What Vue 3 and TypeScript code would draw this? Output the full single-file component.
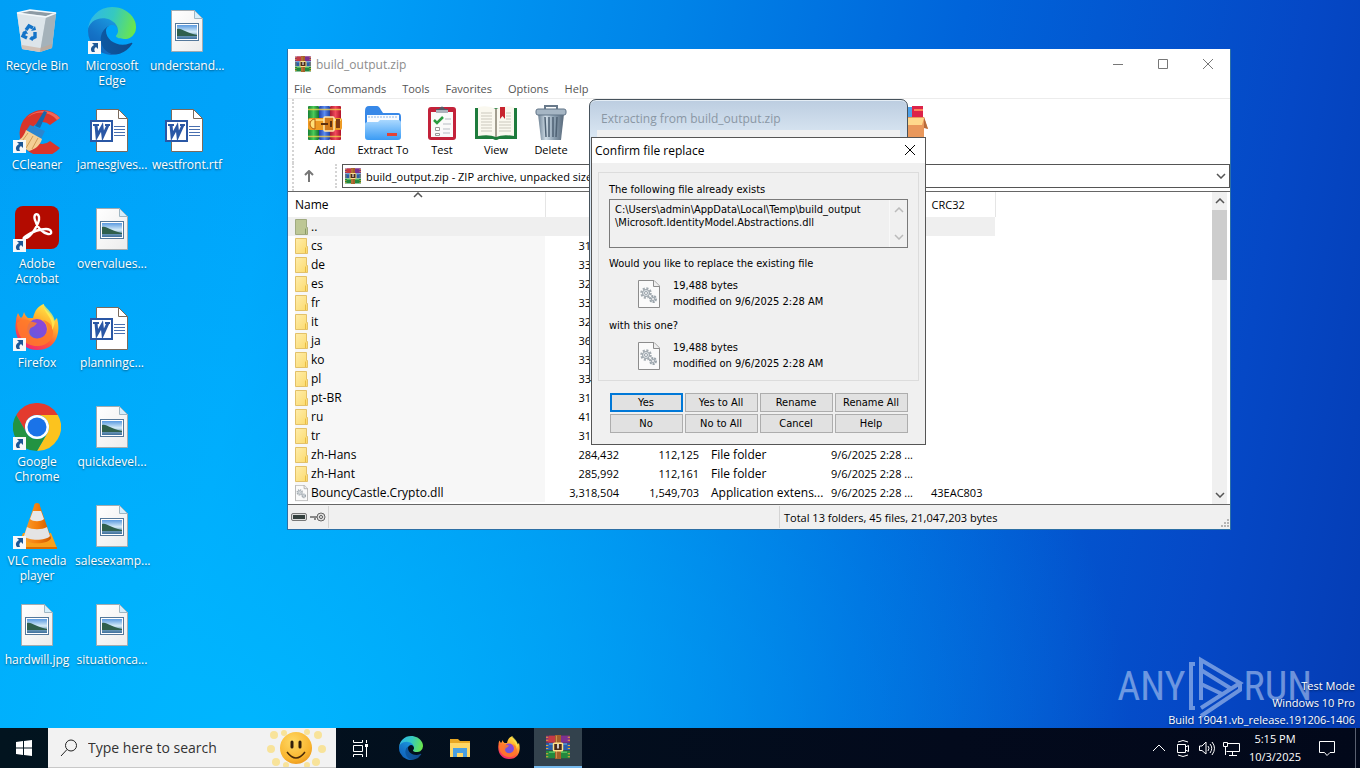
<script setup lang="ts">
interface Shortcut { icon: string; label: string; link?: boolean }
interface Row { icon: string; name: string; size: string; packed: string; type: string; modified: string; crc: string }

const shortcuts: Shortcut[] = [
  { icon: 'bin', label: 'Recycle Bin' },
  { icon: 'ccleaner', label: 'CCleaner', link: true },
  { icon: 'acrobat', label: 'Adobe Acrobat', link: true },
  { icon: 'firefox', label: 'Firefox', link: true },
  { icon: 'chrome', label: 'Google Chrome', link: true },
  { icon: 'vlc', label: 'VLC media player', link: true },
  { icon: 'picture', label: 'hardwill.jpg' },
  { icon: 'edge', label: 'Microsoft Edge', link: true },
  { icon: 'word', label: 'jamesgives...' },
  { icon: 'picture', label: 'overvalues...' },
  { icon: 'word', label: 'planningc...' },
  { icon: 'picture', label: 'quickdevel...' },
  { icon: 'picture', label: 'salesexamp...' },
  { icon: 'picture', label: 'situationca...' },
  { icon: 'picture', label: 'understand...' },
  { icon: 'word', label: 'westfront.rtf' },
]

const menus: string[] = ['File', 'Commands', 'Tools', 'Favorites', 'Options', 'Help']

const tools = [
  { icon: 'add', label: 'Add' },
  { icon: 'extract', label: 'Extract To' },
  { icon: 'test', label: 'Test' },
  { icon: 'view', label: 'View' },
  { icon: 'delete', label: 'Delete' },
]

const stamp = '9/6/2025 2:28 ...'
const folder = (name: string, size: string, packed = '', type = '', modified = ''): Row => ({
  icon: 'folder', name, size, packed, type, modified, crc: '',
})

const rows: Row[] = [
  folder('cs', '311,728'),
  folder('de', '331,696'),
  folder('es', '321,448'),
  folder('fr', '331,184'),
  folder('it', '321,960'),
  folder('ja', '361,904'),
  folder('ko', '331,208'),
  folder('pl', '331,720'),
  folder('pt-BR', '311,216'),
  folder('ru', '411,080'),
  folder('tr', '311,728'),
  folder('zh-Hans', '284,432', '112,125', 'File folder', stamp),
  folder('zh-Hant', '285,992', '112,161', 'File folder', stamp),
  {
    icon: 'dll', name: 'BouncyCastle.Crypto.dll', size: '3,318,504', packed: '1,549,703',
    type: 'Application extens...', modified: stamp, crc: '43EAC803',
  },
]

const path = 'C:\\Users\\admin\\AppData\\Local\\Temp\\build_output\n\\Microsoft.IdentityModel.Abstractions.dll'
const answers: string[] = ['Yes', 'Yes to All', 'Rename', 'Rename All', 'No', 'No to All', 'Cancel', 'Help']
</script>

<template>
  <div class="screen">
    <svg class="defs" aria-hidden="true">
      <defs>
        <linearGradient id="gEdgeA" x1="0" y1="0" x2="1" y2="0"><stop offset="0" stop-color="#0c59a4" /><stop offset="1" stop-color="#114a8b" /></linearGradient>
        <linearGradient id="gEdgeB" x1="0.8" y1="0" x2="0.2" y2="1"><stop offset="0" stop-color="#1b9de2" /><stop offset=".6" stop-color="#1472c6" /><stop offset="1" stop-color="#0f62b8" /></linearGradient>
        <linearGradient id="gEdgeC" x1="0" y1=".3" x2="1" y2=".5"><stop offset="0" stop-color="#2fb7ea" /><stop offset=".5" stop-color="#35c9c0" /><stop offset="1" stop-color="#6ae64c" /></linearGradient>
        <linearGradient id="gFox" x1=".8" y1="0" x2=".25" y2="1"><stop offset="0" stop-color="#fff14f" /><stop offset=".35" stop-color="#ffb32e" /><stop offset=".65" stop-color="#ff5b36" /><stop offset="1" stop-color="#f0207c" /></linearGradient>
        <linearGradient id="gGlobe" x1="0" y1="1" x2="1" y2="0"><stop offset="0" stop-color="#5b5fe0" /><stop offset="1" stop-color="#9a3fd5" /></linearGradient>
        <linearGradient id="gPage" x1="0" y1="0" x2="1" y2="1"><stop offset="0" stop-color="#ffffff" /><stop offset="1" stop-color="#ececec" /></linearGradient>
        <linearGradient id="gPhoto" x1="0" y1="0" x2="0" y2="1"><stop offset="0" stop-color="#5a9ae0" /><stop offset=".5" stop-color="#d6ecf8" /><stop offset=".7" stop-color="#7ba6c0" /><stop offset="1" stop-color="#3f6f9c" /></linearGradient>
        <linearGradient id="gCone" x1="0" y1="0" x2="1" y2="0"><stop offset="0" stop-color="#f9a030" /><stop offset=".5" stop-color="#f57f0c" /><stop offset="1" stop-color="#cf5a00" /></linearGradient>
        <linearGradient id="gBlue" x1="0" y1="0" x2="0" y2="1"><stop offset="0" stop-color="#a9d8ff" /><stop offset="1" stop-color="#3a9bf4" /></linearGradient>
        <linearGradient id="gCan" x1="0" y1="0" x2="1" y2="0"><stop offset="0" stop-color="#6d8193" /><stop offset=".3" stop-color="#cfdce6" /><stop offset=".6" stop-color="#8fa3b4" /><stop offset="1" stop-color="#58697a" /></linearGradient>
        <linearGradient id="gFolder" x1="0" y1="0" x2="1" y2="1"><stop offset="0" stop-color="#ffedab" /><stop offset="1" stop-color="#fbda6c" /></linearGradient>
        <radialGradient id="gSun" cx=".4" cy=".3" r=".8"><stop offset="0" stop-color="#ffd964" /><stop offset=".7" stop-color="#f9b42e" /><stop offset="1" stop-color="#e88f17" /></radialGradient>
        <linearGradient id="gRed" x1="0" y1="0" x2="1" y2="0"><stop offset="0" stop-color="#a81830" /><stop offset=".5" stop-color="#f24a5c" /><stop offset="1" stop-color="#b01028" /></linearGradient>
        <linearGradient id="gGreen" x1="0" y1="0" x2="1" y2="0"><stop offset="0" stop-color="#168036" /><stop offset=".5" stop-color="#4ccc58" /><stop offset="1" stop-color="#127030" /></linearGradient>
        <linearGradient id="gNavy" x1="0" y1="0" x2="1" y2="0"><stop offset="0" stop-color="#1f3fa8" /><stop offset=".5" stop-color="#5a8cf2" /><stop offset="1" stop-color="#2040a0" /></linearGradient>
      </defs>

      <symbol id="bin" viewBox="0 0 48 48">
        <path d="M4 6 17 3 43 6 39 41 27 45 9 42Z" fill="#c8d3da" />
        <path d="M4 6 33 10 27 45 9 42Z" fill="#dde5ea" />
        <path d="M33 10 43 6 39 41 27 45Z" fill="#a5b2ba" />
        <path d="M5 6 17 4 42 6 33 9Z" fill="#8d9ba5" />
        <path d="M9 38 27 41 39 37 39 41 27 45 9 42Z" fill="#c9a58c" opacity=".55" />
        <path d="M4 6 17 3 43 6 33 10Z" fill="none" stroke="#f3f8fb" stroke-width="1.4" />
        <g fill="none" stroke="#1474c8" stroke-width="3.4"><path d="M13 23 16 19 20 21" /><path d="M22 25 22 30 18 32" /><path d="M14 31 10 29 12 25" /></g>
        <path d="m18 24 5-1-1-4zM20 34l-4-2 3-3zM9 26l4-3 2 4z" fill="#1474c8" />
      </symbol>

      <symbol id="edge" viewBox="0 0 256 256">
        <path fill="url(#gEdgeA)" d="M231 190.500a101 101 0 0 1-10.700 4.700 101.900 101.900 0 0 1-35.900 6.400c-47.300 0-88.500-32.500-88.500-74.300A31.500 31.500 0 0 1 112.300 100c-42.800 1.800-53.800 46.400-53.800 72.500 0 73.900 68.100 81.400 82.800 81.400 7.900 0 19.800-2.300 27-4.600l1.300-.4a128.300 128.300 0 0 0 66.600-52.800 4 4 0 0 0-5.200-5.600z" />
        <path fill="url(#gEdgeB)" d="M105.700 241.400A79.200 79.200 0 0 1 83 220a80.700 80.700 0 0 1 29.500-120c3.100-1.500 8.500-4.100 15.600-4a32.400 32.400 0 0 1 25.700 13 31.900 31.900 0 0 1 6.300 18.700c0-.2 24.500-79.600-80-79.600-43.900 0-80 41.600-80 78.200a130.200 130.200 0 0 0 12.100 56 128 128 0 0 0 156.400 67.100 75.500 75.500 0 0 1-62.900-8z" />
        <path fill="url(#gEdgeC)" d="M152.300 148.900c-.8 1-3.300 2.500-3.300 5.700 0 2.600 1.700 5.200 4.800 7.300 14.600 10.100 42 8.800 42.100 8.800 10.800 0 21.400-3 30.700-8.500A62.500 62.500 0 0 0 256 108.300c.3-22.300-8-37.200-11.300-43.800C223.600 23.400 178.300 0 128 0A128 128 0 0 0 0 126.200c.5-36.500 36.800-66 80-66 3.500 0 23.500.3 42 10a72.600 72.600 0 0 1 30.900 29.300c6.100 10.600 7.200 24.100 7.200 29.500s-2.700 13.300-7.800 19.900z" />
      </symbol>

      <symbol id="ccleaner" viewBox="0 0 48 48">
        <path d="M47 12 37 19a11 11 0 1 0 0 16l10 7A23 23 0 1 1 47 12Z" fill="#d9352b" />
        <path d="M47 12 44 14A21 21 0 0 0 12 14 23 23 0 0 1 47 12Z" fill="#f2685a" />
        <path d="m31 5 3 1-7 16-5-2z" fill="#1668ac" />
        <path d="m17 19 15 6-4 8-15-8z" fill="#2b86cf" />
        <path d="M13 24 29 33C27 40 22 43 16 45L1 36C7 35 11 30 13 24Z" fill="#f4cf94" />
        <path d="M15 27 7 38M20 30 13 42M25 32 19 43" stroke="#d19a55" fill="none" />
      </symbol>

      <symbol id="acrobat" viewBox="0 0 48 48">
        <rect x="2" y="1" width="44" height="43" rx="8" fill="#b30b00" />
        <path d="M12 33C17 34 27 18 26 12 25 7 20 9 22 15 24 23 30 28 35 29 40 30 39 24 33 24 27 24 19 27 13 31 10 33 10 34 12 33Z" fill="none" stroke="#fff" stroke-width="2.400" />
      </symbol>

      <symbol id="firefox" viewBox="0 0 48 48">
        <path d="M5 9c1 2 2 4 3 5 2-2 2-3 3-6 1 3 2 4 4 6h5c2-8 5-12 11-14-1 6 7 8 10 17l3-3c4 14 0 32-20 32C10 46 0 34 3 17c0-3 1-6 2-8Z" fill="url(#gFox)" />
        <circle cx="24" cy="25" r="10" fill="url(#gGlobe)" />
        <path d="M4 19c4-4 8-4 11-3 3 2 7 2 9 3-2 4-6 4-7 6-3 6 4 11 10 9 9-2 10-12 3-18 14 3 14 24-4 26-14 1-22-10-22-23Z" fill="#ff7a2a" opacity=".85" />
        <path d="M31 1c-1 8 10 12 8 25 7-11-1-17-8-25Z" fill="#fff056" opacity=".75" />
      </symbol>

      <symbol id="chrome" viewBox="0 0 48 48">
        <path d="M24 12H44.800A24 24 0 0 0 3.200 12L13.600 30A12 12 0 0 1 24 12Z" fill="#e33b2e" />
        <path d="M34.400 30 24 48A24 24 0 0 0 44.800 12H24A12 12 0 0 1 34.400 30Z" fill="#fcc31e" />
        <path d="M13.600 30 3.200 12A24 24 0 0 0 24 48L34.400 30A12 12 0 0 1 13.600 30Z" fill="#229342" />
        <circle cx="24" cy="24" r="12" fill="#fff" /><circle cx="24" cy="24" r="9.500" fill="#1a73e8" />
      </symbol>

      <symbol id="vlc" viewBox="0 0 48 48">
        <path d="M10 31H38L44 46H4Z" fill="#f9a01b" /><path d="M4 45H44V47H4Z" fill="#d96c00" />
        <path d="M24 1c2 0 3 1 3 3l11 32c-2 7-26 7-28 0L21 4c0-2 1-3 3-3Z" fill="url(#gCone)" />
        <path d="M20 9h8l3 8c-3 3-11 3-14 0Z" fill="#e8e8e8" />
        <path d="M14 25c5 3 15 3 20 0l3 9c-4 5-22 5-26 0Z" fill="#e4e4e4" />
      </symbol>

      <symbol id="picture" viewBox="0 0 48 48">
        <path d="M8.500 3.500H31.500L39.500 11.500V44.500H8.500Z" fill="url(#gPage)" stroke="#a3abb0" />
        <path d="M31.500 3.500V11.500H39.500Z" fill="#d5eefb" stroke="#9fb6c3" />
        <rect x="12.500" y="16.500" width="23" height="17" fill="#fff" stroke="#54789b" />
        <rect x="14" y="18" width="20" height="14" fill="url(#gPhoto)" />
        <path d="M14 22c3-1 5 1 8 2s6 3 12 4v1H14Z" fill="#2f5f4c" />
      </symbol>

      <symbol id="word" viewBox="0 0 48 48">
        <path d="M8.500 3.500H30.500L39.500 12.500V45.500H8.500Z" fill="#fff" stroke="#7a6a5c" />
        <path d="M30.500 3.500V12.500H39.500Z" fill="#fff" stroke="#7a6a5c" />
        <rect x="3" y="15" width="21" height="20" fill="#fff" stroke="#2a57a5" stroke-width="2" />
        <path d="m8 19 1 11 5-9 1 9 5-11" fill="none" stroke="#2a57a5" stroke-width="3" />
        <path d="M5 19h6M17 19h5" stroke="#2a57a5" stroke-width="2" />
        <path d="M26 20.500H37M26 23.500H37M26 26.500H37M26 29.500H37" stroke="#4a70b0" />
      </symbol>

      <symbol id="arrow" viewBox="0 0 13 13">
        <rect width="13" height="13" fill="#f6f8fa" />
        <path d="M4 2h6v6L8 6C6 7 6 9 7 11H4C2 8 3 6 6 4Z" fill="#1d5796" />
      </symbol>

      <symbol id="rar" viewBox="0 0 32 32">
        <rect x="0" y="1" width="32" height="9" fill="#8c2f73" /><path d="M4 1h10v9H2z" fill="#c53a44" /><path d="M20 1h11v9H20z" fill="#7d3190" />
        <rect x="0" y="11" width="32" height="9" fill="#2b5ea8" /><path d="M4 12h24" stroke="#5b95d8" stroke-width="2" />
        <rect x="0" y="21" width="32" height="10" fill="#23883e" /><path d="M4 23h24" stroke="#53bf5e" stroke-width="2" />
        <path d="M0 3h3M0 7h3M0 14h3M0 18h3M0 25h3M0 29h3M29 3h3M29 7h3M29 14h3M29 18h3M29 25h3M29 29h3" stroke="#e6a53a" stroke-width="1.500" />
        <rect x="12" y="0" width="8" height="32" fill="#a5602a" /><path d="M14 1v30" stroke="#dca05c" />
        <rect x="10" y="11" width="12" height="10" rx="1" fill="#4a2b18" stroke="#ffe08a" stroke-width="2" /><path d="M16 12v6" stroke="#fff" stroke-width="2" />
      </symbol>

      <symbol id="add" viewBox="0 0 36 36">
        <rect x="1" y="1" width="11" height="34" rx="1" fill="url(#gGreen)" /><rect x="12" y="1" width="11" height="34" rx="1" fill="url(#gNavy)" /><rect x="23" y="1" width="11" height="34" rx="1" fill="url(#gRed)" />
        <path d="M1 4.500H34M1 31.500H34" stroke="#f3d04a" stroke-width="1.400" opacity=".8" />
        <rect x="1" y="13" width="34" height="12" rx="2" fill="#ee9b24" /><path d="M2 15h32" stroke="#ffd36a" stroke-width="2" />
        <path d="M8 14a5 5 0 0 0 0 10z" fill="#ffe07a" stroke="#b85f0c" /><rect x="17" y="12" width="10" height="14" rx="1" fill="#d1791c" stroke="#ffe9b0" stroke-width="1.500" /><path d="M14 19h7M24 16v6" stroke="#5d2f10" stroke-width="2" /><rect x="29" y="14" width="4" height="9" fill="#7d3914" />
      </symbol>
      <symbol id="extract" viewBox="0 0 36 36">
        <path d="M0 6q0-5 4-5h8q2 0 4 4l2 3h15q3 0 3 4v20H0Z" fill="#3788e8" /><path d="M2 10h32v12H2z" fill="#f8fbff" />
        <path d="M3 12h30" stroke="#8eb6e6" stroke-dasharray="2 1" />
        <path d="M0 19q0-2 3-2h10l2 -2h18q3 0 3 3v14q0 3-3 3H3q-3 0-3-3Z" fill="url(#gBlue)" /><rect x="22" y="28" width="10" height="3" fill="#e34336" />
      </symbol>
      <symbol id="test" viewBox="0 0 36 36">
        <rect x="4" y="2" width="28" height="33" rx="3" fill="#c3223a" /><path d="M7 7h22v25H7z" fill="#fafafa" />
        <path d="M12 7V4h3q3-5 6 0h3v3z" fill="#555b66" /><rect x="12" y="5" width="12" height="3" fill="#aeb4bd" />
        <path d="m10 15 3 3 6-6" fill="none" stroke="#2a9b3f" stroke-width="2.500" /><path d="M21 14h6M19 19h8M19 24h7M19 28h7" stroke="#b7bcc4" /><path d="M11.500 22.500h4v3h-4zM11.500 28.500h4v2h-4z" fill="#fff" stroke="#999" />
      </symbol>
      <symbol id="view" viewBox="0 0 42 36">
        <path d="M0 3h42v31H24q-3 2-6 0H0Z" fill="#1e7b3c" /><path d="M3 2q11-2 18 2 7-4 18-2v29q-11-2-18 1-7-3-18-1Z" fill="#faf8ef" />
        <path d="M21 4v28" stroke="#a39e90" stroke-width="2" /><path d="M6 8h11M6 11h11M6 14h11M6 17h11M6 20h11M6 23h11M6 26h11M24 17h12M24 20h12M24 23h12M24 26h12M31 11h5M31 14h5M31 8h5" stroke="#cbc8bd" />
        <path d="M25 2h5v12l-2.500-3L25 14z" fill="#c8242f" />
      </symbol>
      <symbol id="delete" viewBox="0 0 36 36">
        <path d="M12 4V1h12v3" fill="none" stroke="#68798a" stroke-width="2" />
        <path d="M5 9H31L28 35H8Z" fill="url(#gCan)" /><path d="M12 12l1 20M16 12v20M20 12v20M24 12l-1 20" stroke="#4f6274" stroke-width="1.500" />
        <rect x="3" y="4" width="30" height="6" rx="2" fill="#a6b6c4" stroke="#617487" />
      </symbol>
      <symbol id="sfx" viewBox="0 0 36 36">
        <path d="M3 3h10v12H3z" fill="url(#gGreen)" /><path d="M11 2h9v12h-9z" fill="#4da0e8" /><path d="M20 1h11v12H20z" fill="#dc2349" /><path d="M22 5h9" stroke="#ff825c" stroke-width="2" />
        <path d="M0 12h32l4 12-4-2v13H2V22Z" fill="#e9985c" /><path d="M2 13h30l-2 7H2z" fill="#ffd88c" /><path d="m32 12 4 12-4-1z" fill="#b76c3c" />
      </symbol>

      <symbol id="folder" viewBox="0 0 13 16"><path d="M.5.500H11.500V8.500H12.500V15.500H.500Z" fill="url(#gFolder)" stroke="#e3c169" /><path d="M10.500 15V9.500" stroke="#e9bd45" /></symbol>
      <symbol id="up" viewBox="0 0 13 16"><path d="M.5.500H11.500V8.500H12.500V15.500H.500Z" fill="#bdc795" stroke="#a0aa80" /><path d="M10.500 15V9.500" stroke="#8a9a68" /></symbol>
      <symbol id="dll" viewBox="0 0 22 28">
        <path d="M.5.500H16L21.500 6V27.500H.500Z" fill="#fafafa" stroke="#8c8c8c" /><path d="M15.500.500V6.500H21.500" fill="#eee" stroke="#8c8c8c" />
        <circle cx="8" cy="13" r="4.500" fill="none" stroke="#a3abb1" stroke-width="2.500" stroke-dasharray="2 1.500" /><circle cx="8" cy="13" r="3.500" fill="#dfe4e8" stroke="#9aa3aa" /><circle cx="8" cy="13" r="1.500" fill="#fff" stroke="#9aa3aa" />
        <circle cx="15" cy="19" r="3" fill="#dfe4e8" stroke="#9aa3aa" stroke-width="2" stroke-dasharray="2 1" /><circle cx="15" cy="19" r="1.500" fill="#fff" stroke="#9aa3aa" />
      </symbol>
      <symbol id="chevron" viewBox="0 0 10 6"><path d="M1 5 5 1 9 5" fill="none" stroke="currentColor" stroke-width="1.500" /></symbol>
    </svg>

    <main class="desktop">
      <nav class="shortcuts" aria-label="Desktop">
        <button v-for="s in shortcuts" :key="s.label" class="shortcut" type="button">
          <span class="tile">
            <svg class="big"><use :href="'#' + s.icon" /></svg>
            <svg v-if="s.link" class="link"><use href="#arrow" /></svg>
          </span>
          <span>{{ s.label }}</span>
        </button>
      </nav>

      <section class="archive" aria-label="build_output.zip">
        <header class="title">
          <svg class="i16"><use href="#rar" /></svg>
          <h1>build_output.zip</h1>
          <button type="button" aria-label="Minimize"><svg viewBox="0 0 12 12"><path d="M1 6.500H11" /></svg></button>
          <button type="button" aria-label="Maximize"><svg viewBox="0 0 12 12"><path d="M1.500 1.500H10.500V10.500H1.500Z" /></svg></button>
          <button type="button" aria-label="Close"><svg viewBox="0 0 12 12"><path d="M1 1 11 11M11 1 1 11" /></svg></button>
        </header>
        <nav class="menu"><button v-for="m in menus" :key="m" type="button">{{ m }}</button></nav>
        <div class="tools">
          <button v-for="t in tools" :key="t.icon" type="button" :class="t.icon"><svg><use :href="'#' + t.icon" /></svg>{{ t.label }}</button>
          <button type="button" class="sfx" aria-label="SFX"><svg><use href="#sfx" /></svg></button>
        </div>
        <div class="address">
          <button type="button" aria-label="Up"><svg viewBox="0 0 12 12"><path d="M6 12V1M2 5 6 1 10 5" /></svg></button>
          <div class="place">
            <svg class="i16"><use href="#rar" /></svg>
            <input aria-label="Location" value="build_output.zip - ZIP archive, unpacked size 21,047,203 bytes" />
            <svg class="chev down"><use href="#chevron" /></svg>
          </div>
        </div>
        <div class="list">
          <div class="sheet">
            <svg class="chev sort"><use href="#chevron" /></svg>
            <table>
              <colgroup><col class="c-name"><col class="c-size"><col class="c-pack"><col class="c-type"><col class="c-date"><col class="c-crc"></colgroup>
              <thead><tr><th>Name</th><th /><th /><th /><th /><th>CRC32</th></tr></thead>
              <tbody>
                <tr class="parent"><td><span class="file"><svg><use href="#up" /></svg>..</span></td><td /><td /><td /><td /><td /></tr>
                <tr v-for="r in rows" :key="r.name">
                  <td><span class="file"><svg><use :href="'#' + r.icon" /></svg>{{ r.name }}</span></td>
                  <td class="num">{{ r.size }}</td><td class="num">{{ r.packed }}</td><td>{{ r.type }}</td><td class="date">{{ r.modified }}</td><td class="date">{{ r.crc }}</td>
                </tr>
              </tbody>
            </table>
          </div>
          <div class="scroll"><svg class="chev"><use href="#chevron" /></svg><i /><svg class="chev down"><use href="#chevron" /></svg></div>
        </div>
        <footer class="status">
          <div class="locks">
            <svg viewBox="0 0 16 10"><rect x=".5" y="1.500" width="15" height="7" rx="1.500" fill="#ddd" stroke="#777" /><rect x="2" y="3" width="12" height="4" fill="#34403e" /></svg>
            <svg viewBox="0 0 16 10"><path d="M0 4h8v2H6v2H4V6H0z" fill="#888" /><circle cx="11" cy="5" r="4" fill="#ddd" stroke="#666" /><circle cx="11" cy="5" r="1.500" fill="#fff" stroke="#555" /></svg>
          </div>
          <div class="blank" />
          <div class="total">Total 13 folders, 45 files, 21,047,203 bytes</div>
          <svg class="grip" viewBox="0 0 10 10"><path d="M7 1h2M4 4h2M7 4h2M1 7h2M4 7h2M7 7h2" stroke="#b4b4b4" stroke-width="2" /></svg>
        </footer>
      </section>

      <section class="progress"><h2>Extracting from build_output.zip</h2><div /></section>

      <section class="dialog" role="dialog" aria-labelledby="confirm">
        <header><h2 id="confirm">Confirm file replace</h2><button type="button" aria-label="Close"><svg viewBox="0 0 12 12"><path d="M1 1 11 11M11 1 1 11" /></svg></button></header>
        <div class="group">
          <label for="target">The following file already exists</label>
          <div class="box">
            <textarea id="target" readonly :value="path" />
            <div class="mini"><svg class="chev"><use href="#chevron" /></svg><svg class="chev down"><use href="#chevron" /></svg></div>
          </div>
          <p>Would you like to replace the existing file</p>
          <div class="info"><svg><use href="#dll" /></svg><span>19,488 bytes<br>modified on 9/6/2025 2:28 AM</span></div>
          <p>with this one?</p>
          <div class="info"><svg><use href="#dll" /></svg><span>19,488 bytes<br>modified on 9/6/2025 2:28 AM</span></div>
        </div>
        <div class="answers"><button v-for="a in answers" :key="a" type="button" :class="{ main: a === 'Yes' }">{{ a }}</button></div>
      </section>

      <div class="brand">
        <span>ANY</span>
        <svg viewBox="0 0 58 62"><path d="M9 8H5V52H9M15 44V4L54 27 15 52M15 60 54 34V27M15 28 36 38M15 14 44 32" fill="none" stroke="currentColor" stroke-width="4" /></svg>
        <span>RUN</span>
      </div>
      <p class="build">Test Mode<br>Windows 10 Pro<br>Build 19041.vb_release.191206-1406</p>
    </main>

    <footer class="taskbar">
      <button class="start" type="button" aria-label="Start"><svg viewBox="0 0 16 16"><path d="M0 2 7 1V7.500H0ZM8 1 16 0V7.500H8ZM0 8.500H7V15L0 14ZM8 8.500H16V16L8 15Z" fill="#fff" /></svg></button>
      <label class="search">
        <svg viewBox="0 0 18 18"><circle cx="11" cy="6.500" r="5.500" /><path d="M7 10.500 1 17" /></svg>
        <input type="text" placeholder="Type here to search" aria-label="Search">
        <svg class="sun" viewBox="0 0 60 38"><g fill="#f8e39a"><circle cx="8" cy="6" r="4" /><circle cx="5" cy="20" r="4" /><circle cx="10" cy="33" r="4" /><circle cx="18" cy="4" r="3" /><circle cx="52" cy="6" r="4" /><circle cx="56" cy="20" r="4" /><circle cx="50" cy="33" r="4" /><circle cx="41" cy="3" r="3" /><circle cx="20" cy="36" r="3" /><circle cx="41" cy="36" r="3" /></g><circle cx="30" cy="19" r="16" fill="url(#gSun)" /><path d="M26 13v5M34 13v5" stroke="#34200a" stroke-width="3" stroke-linecap="round" /><path d="M21 23q9 12 18 0" fill="none" stroke="#4a2a08" stroke-width="1.500" /></svg>
      </label>
      <button class="tasks" type="button" aria-label="Task View"><svg class="line" viewBox="0 0 18 18"><path d="M2.500 1V3.500H11.500V1M2.500 6.500H11.500V12.500H2.500ZM2.500 18V15.500H11.500V18M15.500 1V4M15.500 8V18" /><path d="M14 5h3v3h-3z" fill="#fff" stroke="none" /></svg></button>
      <button type="button" aria-label="Microsoft Edge"><svg><use href="#edge" /></svg></button>
      <button type="button" aria-label="File Explorer"><svg viewBox="0 0 24 24"><path d="M2 3h8l2 2h10v16H2z" fill="#e8a723" /><path d="M2 7h20v14H2z" fill="#ffd766" /><path d="M5 12h14v9h-4v-4H9v4H5z" fill="#4a9fe0" /></svg></button>
      <button type="button" aria-label="Firefox"><svg><use href="#firefox" /></svg></button>
      <button class="active" type="button" aria-label="WinRAR"><svg><use href="#rar" /></svg></button>
      <div class="tray">
        <button type="button" aria-label="Hidden icons"><svg class="line" viewBox="0 0 18 18"><path d="M3 12 9 6 15 12" /></svg></button>
        <button type="button" aria-label="Meet Now"><svg class="line" viewBox="0 0 18 18"><path d="M4 3Q9 0 14 3M4 16Q9 19 14 16M3.500 5.500H11.500V13.500H3.500ZM11.500 8 14.500 6.500V12.500L11.500 11" /></svg></button>
        <button type="button" aria-label="Volume"><svg class="line" viewBox="0 0 18 18"><path d="M1.500 7H4L8 3V15L4 11.500H1.500ZM10 7Q12 9 10 12M12 5Q15.500 9 12 14M14 3Q19 9 14 16" /></svg></button>
        <button type="button" aria-label="Network"><svg class="line" viewBox="0 0 18 18"><path d="M6 4.500H17.500V12.500H4.500M10.500 12.500V16M7 16.500H15M1.500 3.500H5.500V7.500H1.500ZM3.500 7.500V16" /></svg></button>
        <time>5:15 PM<br>10/3/2025</time>
        <button class="note" type="button" aria-label="Notifications"><svg class="line" viewBox="0 0 18 18"><path d="M1.500 2.500H16.500V13.500H12L9 16.500 6.500 13.500H1.500Z" /></svg></button>
        <i />
      </div>
    </footer>
  </div>
</template>

<style>
html, body { margin: 0; }
</style>

<style scoped>
.screen { height: 100vh; display: flex; flex-direction: column; overflow: hidden; font: 12px/15px "Open Sans", "Noto Sans", sans-serif; color: #000; }
.screen * { box-sizing: border-box; }
button, input, textarea { font: inherit; color: inherit; border: 0; padding: 0; margin: 0; background: none; outline: 0; }
h1, h2, p { font: inherit; margin: 0; }
svg { display: block; flex: none; }
.defs { position: absolute; width: 0; height: 0; }
.i16 { width: 16px; height: 16px; }
.chev { width: 10px; height: 6px; color: #555; }
.down { transform: rotate(180deg); }

.desktop {
  flex: 1; position: relative; overflow: hidden;
  background:
    radial-gradient(ellipse 65% 85% at 18% 100%, rgba(0, 184, 255, .9), rgba(0, 184, 255, 0)),
    linear-gradient(100deg, #009ff6 0%, #00a4fb 20%, #0084e8 45%, #0064da 65%, #0548c6 88%, #053cb4 100%);
}
.shortcuts { display: grid; grid-auto-flow: column; grid-template-rows: repeat(7, 99px); grid-auto-columns: 75px; justify-content: start; padding-top: 7px; }
.shortcut { display: flex; flex-direction: column; align-items: center; gap: 3px; padding-right: 1px; color: #fff; line-height: 15px; text-shadow: 0 1px 2px rgba(0, 0, 0, .5); }
.shortcut > span:last-child { width: 74px; }
.tile { position: relative; }
.big { width: 48px; height: 48px; }
.link { position: absolute; left: 0; bottom: 1px; width: 13px; height: 13px; }

.archive { position: absolute; left: 287px; right: 129px; top: 49px; background: #fff; border: 1px solid #2c6fa5; border-top: 0; }
.title { display: flex; align-items: center; height: 30px; padding-left: 7px; color: #8c8c8c; }
.title h1 { flex: 1; margin-left: 5px; }
.title button { width: 45px; height: 28px; display: grid; place-items: center; }
.title button svg, .dialog header svg { width: 12px; height: 12px; fill: none; stroke: #777; }
.menu { display: flex; gap: 16px; height: 20px; padding-left: 6px; color: #555; border-bottom: 1px solid #ececec; font-size: 11px; }
.tools { display: flex; height: 64px; padding: 6px 0 0 6px; margin-left: 4px; border-left: 2px dotted #d4d4d4; font-size: 11px; }
.tools button { display: flex; flex-direction: column; align-items: center; width: 54px; line-height: 17px; }
.tools svg { width: 36px; height: 36px; }
.tools .add { width: 50px; }
.tools .extract { width: 66px; }
.tools .test { width: 52px; }
.tools .view { width: 56px; }
.tools .view svg { width: 42px; }
.tools .sfx { margin-left: 305px; }
.address { display: flex; align-items: center; height: 28px; padding-bottom: 3px; margin-left: 4px; border-left: 2px dotted #d4d4d4; }
.address button { width: 43px; height: 24px; display: grid; place-items: center; padding-right: 12px; border-right: 2px dotted #d4d4d4; }
.address button svg { width: 12px; height: 12px; fill: none; stroke: #777; stroke-width: 2; }
.place { flex: 1; display: flex; align-items: center; height: 24px; margin-left: 5px; padding: 0 3px 0 2px; border: 1px solid #555; gap: 5px; }
.place input { flex: 1; min-width: 0; font-size: 11px; line-height: 18px; padding-top: 2px; }
.list { display: flex; height: 314px; border: solid #666; border-width: 1px 0; }
.sheet { flex: 1; overflow: hidden; position: relative; }
.sort { position: absolute; left: 125px; top: 0; }
table { table-layout: fixed; width: 707px; border-collapse: collapse; }
.c-name { width: 257px; } .c-size { width: 80px; } .c-pack { width: 80px; } .c-type { width: 120px; } .c-date { width: 100px; } .c-crc { width: 70px; }
th { height: 25px; padding: 0 6px; text-align: left; font-weight: 400; border-right: 1px solid #e5e5e5; }
th:last-child { font-size: 11px; }
th:first-child { padding-left: 7px; }
td { height: 19px; padding: 0 6px; white-space: nowrap; line-height: 17px; }
tbody td:first-child { padding: 0 0 0 7px; background: linear-gradient(90deg, #fff 7px, #f7f7f7 7px); }
.parent td, tbody .parent td:first-child { background: #efefef; }
.num, .date { font-size: 11px; }
.num { text-align: right; }
.file { display: flex; align-items: center; gap: 3px; }
.file svg { width: 13px; height: 16px; }
.scroll { width: 15px; display: flex; flex-direction: column; align-items: center; justify-content: space-between; padding: 6px 0; margin-right: 3px; background: #f0f0f0; }
.scroll i { width: 15px; height: 70px; margin: 6px 0 auto; background: #cdcdcd; }
.status { display: flex; align-items: center; height: 24px; background: #f0f0f0; line-height: 24px; font-size: 11px; }
.status > div { height: 22px; border-right: 1px solid #d4d4d4; }
.locks { display: flex; align-items: center; gap: 3px; width: 41px; padding-left: 3px; }
.locks svg { width: 16px; height: 10px; }
.blank { width: 451px; }
.status > .total { flex: 1; padding-left: 4px; border: 0; }
.grip { width: 10px; height: 10px; align-self: flex-end; }

.progress { position: absolute; left: 589px; top: 99px; width: 319px; height: 282px; padding: 0 7px; border: 1px solid #46525c; border-radius: 7px 7px 0 0; background: linear-gradient(#bccde0, #d9e6f2 36px); box-shadow: inset 0 1px #e4edf5; color: #8a97a4; }
.progress h2 { height: 30px; line-height: 38px; padding-left: 4px; }
.progress div { height: 244px; background: #f0f0f0; }

.dialog { position: absolute; left: 591px; top: 137px; width: 335px; padding-bottom: 11px; background: #f0f0f0; border: 1px solid #555; font: 11px/13px "DejaVu Sans Condensed", "Noto Sans", sans-serif; }
.dialog header { display: flex; height: 25px; align-items: center; justify-content: space-between; padding: 0 9px 1px 3px; background: #fff; font: 12px/15px "Open Sans", sans-serif; }
.dialog header svg { stroke: #000; }
.group { margin: 9px 6px 0; padding: 10px 10px 8px; border: 1px solid #dcdcdc; }
.group label { display: block; height: 16px; }
.box { display: flex; height: 49px; border: 1px solid #7a7a7a; }
.box textarea { flex: 1; min-width: 0; resize: none; overflow: hidden; padding: 3px 5px; white-space: pre; }
.mini { width: 18px; display: flex; flex-direction: column; justify-content: space-between; align-items: center; padding: 7px 0; border-left: 1px solid #f8f8f8; }
.mini svg { color: #bbb; }
.group p { margin-top: 9px; }
.info { display: flex; align-items: center; gap: 13px; margin-top: 8px; padding-left: 29px; line-height: 16px; height: 32px; }
.info svg { width: 22px; height: 28px; }
.answers { display: grid; grid-template-columns: repeat(4, 73px); grid-auto-rows: 19px; gap: 2px; justify-content: center; padding: 12px 0 0; }
.answers button { background: #e1e1e1; border: 1px solid #adadad; }
.answers .main { border: 2px solid #0078d7; }

.brand { position: absolute; right: 48px; bottom: 10px; display: flex; align-items: center; height: 62px; color: rgba(214, 228, 250, .5); font: 40px/62px "Liberation Sans Narrow", "Roboto Condensed", "Open Sans", sans-serif; }
.brand svg { width: 58px; height: 62px; }
.build { position: absolute; right: 5px; bottom: 0; line-height: 17px; font-size: 11px; text-align: right; color: #fff; text-shadow: 0 1px 2px rgba(0, 0, 0, .5); }

.taskbar { display: flex; height: 40px; background: linear-gradient(90deg, #02141f, #030a1c 70%, #02081a); color: #fff; }
.taskbar button { width: 49px; display: grid; place-items: center; }
.taskbar button svg { width: 24px; height: 24px; }
.taskbar .start { width: 48px; }
.taskbar .tasks { width: 50px; padding-right: 2px; }
.taskbar .start svg { width: 16px; height: 16px; }
.taskbar .line, .search > svg { width: 18px; height: 18px; fill: none; stroke: #fff; }
.taskbar button .line { width: 18px; height: 18px; }
.search { display: flex; align-items: center; width: 288px; padding: 0 10px 0 12px; gap: 10px; background: #f2f2f2; border: solid #c8c8c8; border-width: 0 0 1px; color: #333; }
.search > svg { stroke: #222; }
.search .sun { width: 60px; height: 38px; stroke: none; }
.search input { flex: 1; min-width: 0; font-size: 14px; line-height: 20px; }
.search input::placeholder { color: #333; opacity: 1; }
.taskbar .active { width: 48px; margin-left: 1px; background: #33424d; border-bottom: 2px solid #76b9ed; }
.tray { margin-left: auto; display: flex; }
.taskbar .tray button { width: 24px; }
.tray time { width: 64px; text-align: center; line-height: 18px; padding-top: 2px; font-size: 11px; }
.taskbar .tray .note { width: 40px; }
.tray i { width: 5px; margin-left: 8px; border-left: 1px solid #5a6070; }
</style>
